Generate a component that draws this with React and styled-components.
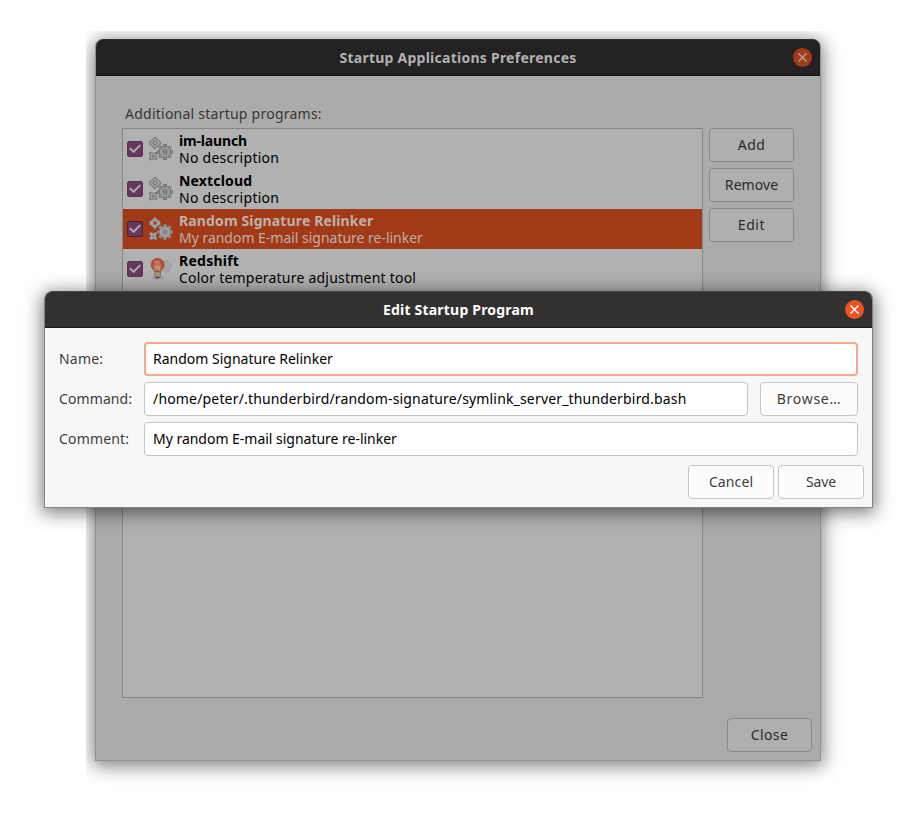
import React from 'react';
import styled, { createGlobalStyle, css } from 'styled-components';

const GlobalStyle = createGlobalStyle`
  * { box-sizing: border-box; }
  body { margin: 0; background: #fff; }
  body, button, input { font: 14px/17px "Noto Sans", "Open Sans", sans-serif; }
`;

const Desktop = styled.main`
  position: relative;
  width: 922px;
  height: 821px;
  overflow: hidden;
  background: #fff;
`;

/* Clips the shadow of the background window. */
const BackLayer = styled.div`
  position: absolute;
  left: 86px;
  top: 31px;
  width: 760px;
  height: 760px;
  padding: 8px 0 0 9px;
  overflow: hidden;
`;

const Window = styled.section`
  display: flex;
  flex-direction: column;
  border: 1px solid ${(p) => (p.$dimmed ? '#919191' : '#848484')};
  border-top: 0;
  border-radius: 8px 8px 0 0;
  ${(p) => p.$dimmed ? css`
    width: 726px;
    height: 722px;
    background: #ababab;
    color: #363636;
    box-shadow: 0 3px 18px 2px rgba(0, 0, 0, 0.5);
  ` : css`
    position: absolute;
    left: 44px;
    top: 291px;
    width: 829px;
    height: 217px;
    background: #f7f7f7;
    color: #3d3d3d;
    box-shadow: 0 3px 18px 2px rgba(0, 0, 0, 0.52);
  `}
`;

const TitleBar = styled.header`
  flex: none;
  display: grid;
  grid-template-columns: 1fr auto 1fr;
  align-items: center;
  height: 37px;
  padding: 0 8px;
  border-radius: 8px 8px 0 0;
  background: ${(p) => (p.$dimmed ? '#232122' : '#323030')};
  color: ${(p) => (p.$dimmed ? '#b2b2b2' : '#fff')};
  border-top: 1px solid ${(p) => (p.$dimmed ? '#2d2b2c' : '#464444')};
  border-bottom: 1px solid ${(p) => (p.$dimmed ? '#111' : '#1c1a1b')};
`;

const Text = styled.span`
  white-space: nowrap;
  letter-spacing: ${(p) => p.$track || 0}px;
  font-weight: ${(p) => (p.$bold ? 700 : 400)};
`;

const Title = styled(Text)`
  grid-column: 2;
  font-weight: 700;
`;

const CloseButton = styled.button`
  justify-self: end;
  display: flex;
  width: 19px;
  height: 19px;
  margin: -1px 0 0;
  padding: 0;
  border: 0;
  border-radius: 50%;
  background: ${(p) => (p.$dimmed ? '#a33a18' : '#e95420')};
  color: ${(p) => (p.$dimmed ? '#b2a5a0' : '#fff')};
`;

const Body = styled.div`
  flex: 1;
  display: flex;
  flex-direction: column;
  padding: 29px 8px 8px 26px;
`;

const ListCaption = styled(Text)`
  padding: 0 0 6px 3px;
`;

const ListArea = styled.div`
  display: flex;
  gap: 6px;
  height: 570px;
`;

const ProgramList = styled.ul`
  width: 581px;
  margin: 0;
  padding: 0;
  border: 1px solid #868686;
  background: #b1b1b1;
  list-style: none;
`;

const ProgramRow = styled.li`
  display: flex;
  align-items: center;
  height: 40px;
  padding-left: 4px;
  background: ${(p) => (p.$selected ? '#a23a17' : 'transparent')};
  color: ${(p) => (p.$selected ? '#bdb0ab' : '#000')};
`;

const Check = styled.span`
  display: flex;
  width: 16px;
  height: 16px;
  border: 1px solid ${(p) => (p.$selected ? '#4a1f39' : '#62315a')};
  border-radius: 2px;
  background: #67365f;
`;

const IconSlot = styled.span`
  display: flex;
  width: 24px;
  height: 24px;
  margin: 0 6px;
`;

const RowText = styled.div`
  display: flex;
  flex-direction: column;
`;

const SideButtons = styled.div`
  display: flex;
  flex-direction: column;
  gap: 6px;
`;

const Button = styled.button`
  display: flex;
  align-items: center;
  justify-content: center;
  flex: none;
  width: ${(p) => p.$width || 85}px;
  height: 34px;
  padding: 0 0 2px;
  border: 1px solid ${(p) => (p.$dimmed ? '#888' : '#c5c5c5')};
  border-radius: 4px;
  background: ${(p) => (p.$dimmed ? '#afafaf' : '#fcfcfc')};
  color: ${(p) => (p.$dimmed ? '#2b2b2b' : '#3d3d3d')};
`;

const Footer = styled.footer`
  display: flex;
  justify-content: flex-end;
  gap: 4px;
  margin-top: auto;
`;

const Form = styled.form`
  flex: 1;
  display: flex;
  flex-direction: column;
  gap: 6px;
  padding: 14px 8px 8px 14px;
`;

const FormRow = styled.div`
  display: grid;
  grid-template-columns: 85px 1fr auto;
  align-items: center;
  padding-right: 6px;
`;

const FieldLabel = styled(Text)`
  padding-bottom: 2px;
`;

const Field = styled.input`
  width: 100%;
  height: 34px;
  padding: 0 ${(p) => (p.$focused ? 7 : 8)}px 2px;
  border: ${(p) => (p.$focused ? '2px solid #f4a88e' : '1px solid #c4c4c4')};
  border-radius: 4px;
  outline: 0;
  background: #fff;
  color: #000;
  letter-spacing: ${(p) => p.$track}px;
`;

const Browse = styled(Button)`
  margin-left: 12px;
`;

const CrossIcon = () => (
  <svg width="19" height="19" viewBox="0 0 19 19" fill="none" stroke="currentColor" strokeWidth="1.4">
    <path d="M5.5 5.5l8 8M13.5 5.5l-8 8" />
  </svg>
);

const TickIcon = () => (
  <svg width="14" height="14" viewBox="0 0 14 14" fill="none" stroke="#b9aeb7" strokeWidth="1.9">
    <path d="M1.8 6.2l3.7 3.7 6.7-6.7" />
  </svg>
);

const Gear = ({ x, y, r, hole, count, size, tone, line }) => (
  <g transform={`translate(${x} ${y})`} fill={tone} stroke={line} strokeWidth="0.9">
    {Array.from({ length: count }, (_, i) => (
      <rect key={i} x={-size / 2} y={-r - 1.9} width={size} height={3.4} transform={`rotate(${(360 / count) * i})`} />
    ))}
    <circle r={r} />
    <circle r={hole + 1.4} fill="none" strokeWidth="0.4" />
    <circle r={hole} fill="#8e8e8e" />
  </g>
);

const GearsIcon = ({ selected }) => {
  const tone = selected ? '#a6a6a6' : '#9d9d9d';
  const line = selected ? '#80766f' : '#6c6c6c';
  return (
    <svg width="24" height="24" viewBox="0 0 24 24">
      <path
        d="M4.9.7h2.2l.5 1.5 2 1.2 1.8 1.3v2.6L9.6 8.6l-2 1.3-.5 1.5H4.9l-.5-1.5-2-1.3L.6 7.3V4.7l1.8-1.3 2-1.2z"
        fill={tone} stroke={line} strokeWidth=".9"
      />
      <circle cx="6" cy="6" r="1.8" fill={selected ? '#a23a17' : '#a9a9a9'} stroke={line} strokeWidth=".9" />
      <path
        d="M.7 15.6h2l1.5 1 1.5-1h2v2l-1 1.5 1 1.6v2h-2l-1.5-1-1.5 1h-2v-2l1-1.6-1-1.5z"
        fill={tone} stroke={line} strokeWidth=".9"
      />
      <circle cx="4.2" cy="19.2" r="1" fill={line} />
      <Gear x={16} y={15} r={5.7} hole={1.8} count={8} size={2.6} tone={tone} line={line} />
    </svg>
  );
};

const BulbIcon = () => (
  <svg width="24" height="24" viewBox="0 0 24 24">
    <defs>
      <radialGradient id="glass" cx="50%" cy="65%" r="65%">
        <stop offset="0" stopColor="#c58d78" />
        <stop offset=".6" stopColor="#b9513a" />
        <stop offset="1" stopColor="#a74a35" />
      </radialGradient>
    </defs>
    <ellipse cx="9" cy="21" rx="6" ry="1.6" fill="#9b9b9b" />
    <g fill="#ababab" stroke="#939393" strokeWidth=".8">
      <circle cx="17" cy="9" r="5.2" />
      <circle cx="18" cy="9" r="2.5" fill="none" stroke="#9c9c9c" />
    </g>
    <path d="M8.5 1.4a6.4 6.4 0 0 0-4.5 11l2 2.4h5.2l2-2.4A6.4 6.4 0 0 0 8.5 1.4z" fill="url(#glass)" stroke="#9d4937" strokeWidth=".7" />
    <path d="M6.7 13.8V9.6l1.9 1.2 1.9-1.2v4.2" fill="none" stroke="#c3a593" strokeWidth=".8" />
    <ellipse cx="8" cy="4.7" rx="3.3" ry="1.8" fill="#ca8b78" opacity=".65" />
    <path d="M5.9 14.5h5.4v5l-1.3 1.6H7.1l-1.2-1.6z" fill="#8f8a65" stroke="#5b583d" strokeWidth=".7" />
    <path d="M6 16.4h5.2M6 18.5h5.2" stroke="#b5b18d" strokeWidth=".8" />
    <path d="M7.2 20.3h2.7" stroke="#4b4a3c" strokeWidth="1.2" />
  </svg>
);

const programs = [
  { name: 'im-launch', nameTrack: -0.17, note: 'No description', noteTrack: 0.27 },
  { name: 'Nextcloud', nameTrack: 0.16, note: 'No description', noteTrack: 0.27 },
  {
    name: 'Random Signature Relinker', nameTrack: 0.13,
    note: 'My random E-mail signature re-linker', noteTrack: -0.02, selected: true,
  },
  { name: 'Redshift', nameTrack: 0.25, note: 'Color temperature adjustment tool', noteTrack: 0.22, bulb: true },
];

const actions = [['Add', 0.4], ['Remove', 0.06], ['Edit', 0.6]];

function PreferencesWindow() {
  return (
    <BackLayer>
      <Window $dimmed>
        <TitleBar $dimmed>
          <Title $track={0.25}>Startup Applications Preferences</Title>
          <CloseButton $dimmed aria-label="Close window"><CrossIcon /></CloseButton>
        </TitleBar>
        <Body>
          <ListCaption $track={0.24}>Additional startup programs:</ListCaption>
          <ListArea>
            <ProgramList>
              {programs.map((p) => (
                <ProgramRow key={p.name} $selected={p.selected}>
                  <Check $selected={p.selected}><TickIcon /></Check>
                  <IconSlot>{p.bulb ? <BulbIcon /> : <GearsIcon selected={p.selected} />}</IconSlot>
                  <RowText>
                    <Text $bold $track={p.nameTrack}>{p.name}</Text>
                    <Text $track={p.noteTrack}>{p.note}</Text>
                  </RowText>
                </ProgramRow>
              ))}
            </ProgramList>
            <SideButtons>
              {actions.map(([label, track]) => (
                <Button key={label} $dimmed><Text $track={track}>{label}</Text></Button>
              ))}
            </SideButtons>
          </ListArea>
          <Footer><Button $dimmed><Text $track={0.36}>Close</Text></Button></Footer>
        </Body>
      </Window>
    </BackLayer>
  );
}

function EditDialog() {
  return (
    <Window role="dialog">
      <TitleBar>
        <Title $track={0.2}>Edit Startup Program</Title>
        <CloseButton aria-label="Close dialog"><CrossIcon /></CloseButton>
      </TitleBar>
      <Form>
        <FormRow>
          <FieldLabel $track={0.2}>Name:</FieldLabel>
          <Field $focused $track={0} defaultValue="Random Signature Relinker" />
        </FormRow>
        <FormRow>
          <FieldLabel $track={0.1}>Command:</FieldLabel>
          <Field $track={0.17} defaultValue="/home/peter/.thunderbird/random-signature/symlink_server_thunderbird.bash" />
          <Browse type="button" $width={98}><Text $track={0.7}>Browse…</Text></Browse>
        </FormRow>
        <FormRow>
          <FieldLabel $track={0.17}>Comment:</FieldLabel>
          <Field $track={-0.02} defaultValue="My random E-mail signature re-linker" />
        </FormRow>
        <Footer>
          <Button type="button" $width={86}><Text $track={0.1}>Cancel</Text></Button>
          <Button type="button" $width={86}><Text $track={-0.1}>Save</Text></Button>
        </Footer>
      </Form>
    </Window>
  );
}

export default function App() {
  return (
    <>
      <GlobalStyle />
      <Desktop>
        <PreferencesWindow />
        <EditDialog />
      </Desktop>
    </>
  );
}
